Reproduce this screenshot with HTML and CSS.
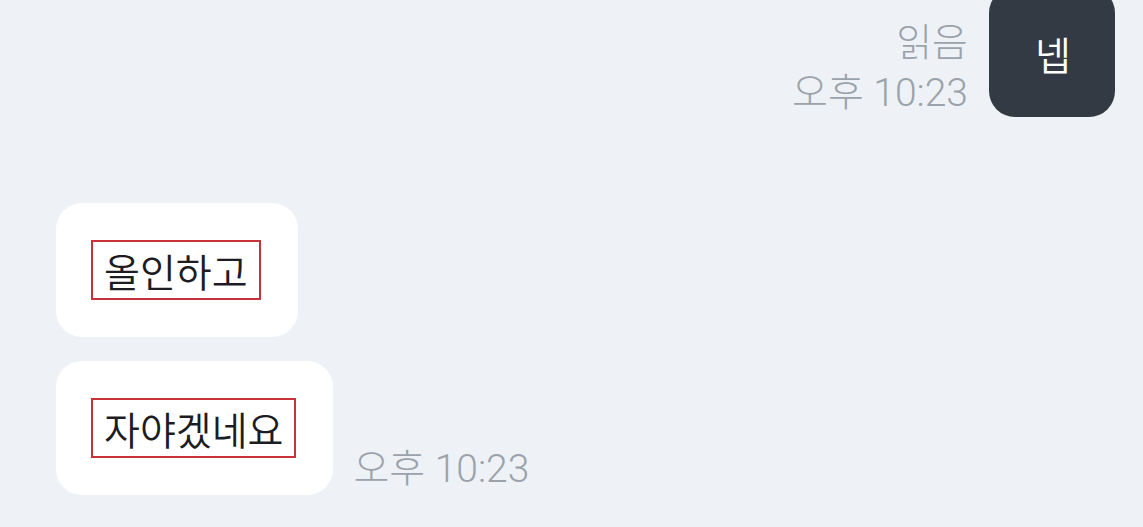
FILE: index.html
```html
<!DOCTYPE html>
<html lang="ko">
<head>
    <meta charset="UTF-8">
    <meta name="viewport" content="width=device-width, initial-scale=1.0">
    <title>채팅</title>
    <link rel="stylesheet" href="styles.css">
</head>
<body>

    <div class="chat">
        <!-- 보낸 메시지 -->
        <div class="row row--mine">
            <div class="meta meta--mine">
                <span class="meta__read">읽음</span>
                <span class="meta__time">오후 10:23</span>
            </div>
            <div class="bubble bubble--mine">넵</div>
        </div>

        <!-- 받은 메시지 -->
        <div class="group">
            <div class="row">
                <div class="bubble bubble--other"><span class="mark">올인하고</span></div>
            </div>
            <div class="row">
                <div class="bubble bubble--other"><span class="mark">자야겠네요</span></div>
                <div class="meta">
                    <span class="meta__time">오후 10:23</span>
                </div>
            </div>
        </div>
    </div>

</body>
</html>
```

FILE: styles.css
```css
body {
    margin: 0;
    padding: 0;
    background-color: #eef2f6;
    font-family: Roboto, "Noto Sans CJK KR", sans-serif;
    overflow: hidden;
}

.chat {
    display: flex;
    flex-direction: column;
    padding: 0 28px 0 56px;
    margin-top: -13px; /* 스크롤된 상태 */
}

.row {
    display: flex;
    align-items: flex-end;
    gap: 20px;
}

.row--mine {
    justify-content: flex-end;
    gap: 21px;
}

.group {
    display: flex;
    flex-direction: column;
    gap: 24px;
    margin-top: 86px;
}

.bubble {
    border-radius: 26px;
    font-family: "Noto Sans CJK KR", sans-serif;
    font-weight: 350;
    font-size: 39px;
    line-height: 58px;
}

.bubble--mine {
    width: 126px;
    height: 130px;
    display: flex;
    align-items: center;
    justify-content: center;
    background-color: #343a44;
    color: #fff;
    box-sizing: border-box;
    padding: 2px 0 0 2px;
}

.bubble--other {
    background-color: #fff;
    color: #1c1c22;
    padding: 37px 37px 37px 35px;
}

/* 강조 표시 */
.mark {
    display: inline-block;
    border: 2px solid #c8323a;
    padding: 0 11px;
    line-height: 56px;
}

.meta {
    display: flex;
    flex-direction: column;
    color: #9ca2ab;
    font-size: 39px;
    font-weight: 300;
    line-height: 42px;
    margin-bottom: 5px;
}

.meta--mine {
    align-items: flex-end;
    margin-bottom: 3px;
}

.meta__read {
    margin-bottom: 8px;
}
```
